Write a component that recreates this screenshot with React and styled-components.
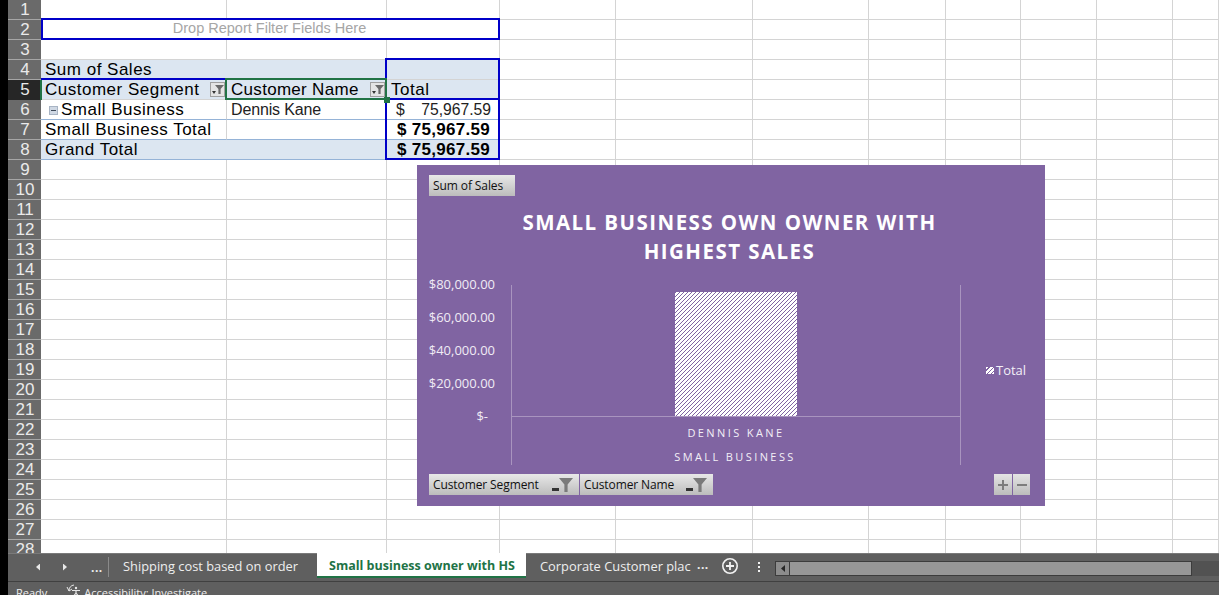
import React from 'react'
import styled, { createGlobalStyle } from 'styled-components'

const GlobalStyle = createGlobalStyle`
  html, body {
    margin: 0;
    padding: 0;
    background: #000;
    overflow: hidden;
  }
`

const COLUMNS = '33px 186px 160px 113px 116px 137px 116px 77px 75px 76px 76px 46px'
const ROW_COUNT = 28
const FILL = '#dce6f1'
const PIVOT_RULE = '#95b3d7'

const pivotRows = {
  2: { cells: [{ span: 3, text: 'Drop Report Filter Fields Here', tone: 'hint', open: true }] },
  4: {
    cells: [
      { span: 2, text: 'Sum of Sales', fill: true, open: true },
      { fill: true, open: true },
    ],
  },
  5: {
    active: true,
    cells: [
      { text: 'Customer Segment', fill: true, open: true, filter: true },
      { text: 'Customer Name', tone: 'tight', fill: true, open: true, filter: true },
      { text: 'Total', fill: true, open: true },
    ],
  },
  6: {
    cells: [
      { text: 'Small Business', collapse: true, rule: PIVOT_RULE },
      { text: 'Dennis Kane', tone: 'thin', rule: PIVOT_RULE },
      { money: true, rule: PIVOT_RULE },
    ],
  },
  7: {
    cells: [
      { text: 'Small Business Total', rule: PIVOT_RULE },
      { rule: PIVOT_RULE },
      { money: true, strong: true, rule: PIVOT_RULE },
    ],
  },
  8: {
    cells: [
      { span: 2, text: 'Grand Total', fill: true, open: true, rule: PIVOT_RULE },
      { money: true, strong: true, fill: true },
    ],
  },
}

const axisValues = ['$80,000.00', '$60,000.00', '$40,000.00', '$20,000.00', '$-']

const toneStyles = {
  hint: { size: '14.5px', spacing: '0', color: '#a6a6a6' },
  thin: { size: '16px', spacing: '-0.15px', color: '#222' },
  tight: { size: '17px', spacing: '0.3px', color: '#000' },
  normal: { size: '17px', spacing: '0.5px', color: '#000' },
}

const Funnel = () => (
  <svg width="14" height="14" viewBox="0 0 14 14">
    <path d="M0 0h14L8.6 6.5V14H5.4V6.5z" fill="#7a7a7a" />
  </svg>
)

const FilterButton = () => (
  <CellFilter>
    <svg width="12" height="11" viewBox="0 0 12 11">
      <path d="M3 1h9L8.6 5v5H6.4V5z" fill="#6a6a6a" />
      <path d="M0 7h4L2 10z" fill="#333" />
    </svg>
  </CellFilter>
)

const Cell = ({ cell }) => (
  <CellBox $span={cell.span} $fill={cell.fill} $open={cell.open} $rule={cell.rule}>
    {cell.collapse && <Collapse />}
    {cell.money && (
      <Money $strong={cell.strong}>
        <span>$</span>
        <span>75,967.59</span>
      </Money>
    )}
    {cell.text && <CellText $tone={cell.tone || 'normal'}>{cell.text}</CellText>}
    {cell.filter && <FilterButton />}
  </CellBox>
)

const SheetRow = ({ number }) => {
  const row = pivotRows[number]
  const cells = row ? row.cells : []
  const used = cells.reduce((total, cell) => total + (cell.span || 1), 0)
  const blanks = Array.from({ length: 11 - used })
  return (
    <Row>
      <RowHead $active={row && row.active}>{number}</RowHead>
      {cells.map((cell, i) => <Cell key={i} cell={cell} />)}
      {blanks.map((_, i) => <CellBox key={i} />)}
    </Row>
  )
}

const PlotDrawing = () => (
  <svg width="451" height="181" viewBox="0 0 451 181">
    <defs>
      <pattern id="hatch" width="4" height="4" patternUnits="userSpaceOnUse">
        <rect width="4" height="4" fill="#fff" />
        <path d="M3 0h1v1H3zM2 1h1v1H2zM1 2h1v1H1zM0 3h1v1H0z" fill="#8064a2" />
      </pattern>
    </defs>
    <rect x="164" y="7" width="122" height="124" fill="url(#hatch)" shapeRendering="crispEdges" />
    <path d="M0.5 0V180M449.5 0V180M0 131.5H450" stroke="#a994bf" fill="none" shapeRendering="crispEdges" />
    <PlotLabel x="225" y="152" letterSpacing="2.4">DENNIS KANE</PlotLabel>
    <PlotLabel x="224" y="176" letterSpacing="2.4">SMALL BUSINESS</PlotLabel>
  </svg>
)

const App = () => (
  <Shell>
    <GlobalStyle />
    <Sheet>
      {Array.from({ length: ROW_COUNT }, (_, i) => <SheetRow key={i} number={i + 1} />)}
      <Frame $left={33} $top={18} $width={459} $height={22} />
      <Frame $left={377} $top={58} $width={115} $height={42} />
      <Frame $left={377} $top={98} $width={115} $height={62} />
      <Rule $left={33} $top={78} $width={185} $height={2} />
      <Rule $left={32} $top={80} $width={2} $height={20} $color="#217346" />
      <Frame $left={217} $top={78} $width={162} $height={22} $color="#217346" />
      <Handle />

      <Chart>
        <FieldButton $width={86}>Sum of Sales</FieldButton>
        <ChartTitle>
          SMALL BUSINESS OWN OWNER WITH
          <br />
          HIGHEST SALES
        </ChartTitle>
        <PlotRow>
          <Axis>
            {axisValues.map((value) => <AxisValue key={value}>{value}</AxisValue>)}
          </Axis>
          <PlotDrawing />
          <Legend>
            <LegendSwatch />
            Total
          </Legend>
        </PlotRow>
        <ChartFooter>
          <FieldGroup>
            <FieldButton $width={150}>
              Customer Segment
              <FieldFilter><Caret /><Funnel /></FieldFilter>
            </FieldButton>
            <FieldButton $width={133}>
              Customer Name
              <FieldFilter><Caret /><Funnel /></FieldFilter>
            </FieldButton>
          </FieldGroup>
          <FieldGroup>
            <ZoomButton $width={18}>
              <svg width="10" height="10" viewBox="0 0 10 10">
                <path d="M5 0v10M0 5h10" stroke="#7d7d7d" strokeWidth="2" />
              </svg>
            </ZoomButton>
            <ZoomButton $width={17}>
              <svg width="10" height="10" viewBox="0 0 10 10">
                <path d="M0 5h10" stroke="#7d7d7d" strokeWidth="2" />
              </svg>
            </ZoomButton>
          </FieldGroup>
        </ChartFooter>
      </Chart>
    </Sheet>

    <TabBar>
      <TabNav>
        <NavArrow $dir="left" />
        <NavArrow $dir="right" />
        <NavDots>...</NavDots>
      </TabNav>
      <Tab $width={208}>Shipping cost based on order</Tab>
      <ActiveTab>Small business owner with HS</ActiveTab>
      <Tab $width={171}>Corporate Customer plac</Tab>
      <MoreDots>...</MoreDots>
      <AddSheet>
        <svg width="18" height="18" viewBox="0 0 18 18">
          <circle cx="9" cy="9" r="7.2" fill="none" stroke="#f2f2f2" strokeWidth="1.6" />
          <path d="M9 5v8M5 9h8" stroke="#f2f2f2" strokeWidth="1.8" />
        </svg>
      </AddSheet>
      <Kebab>
        <i /><i /><i />
      </Kebab>
      <ScrollBar>
        <ScrollStart><NavArrow $dir="left" $dark /></ScrollStart>
        <ScrollThumb />
      </ScrollBar>
    </TabBar>

    <StatusBar>
      <StatusText>Ready</StatusText>
      <svg width="17" height="14" viewBox="0 0 17 14">
        <path d="M3 7a5.5 5.5 0 0 1 5-6M1 3l2 4 3-2" fill="none" stroke="#e8e8e8" strokeWidth="1" />
        <circle cx="10" cy="4" r="1.2" fill="#e8e8e8" />
        <path d="M6 6.5h8M10 6v4M10 9l-3 4M10 9l3 4" fill="none" stroke="#e8e8e8" strokeWidth="1.2" />
      </svg>
      <StatusText>Accessibility: Investigate</StatusText>
    </StatusBar>
  </Shell>
)

const Shell = styled.div`
  width: 1219px;
  height: 595px;
  padding-left: 8px;
  box-sizing: border-box;
  display: flex;
  flex-direction: column;
  overflow: hidden;
  background: #000;
`

const Sheet = styled.div`
  position: relative;
  height: 553px;
  flex: none;
  overflow: hidden;
  background: #fff;
`

const Row = styled.div`
  display: grid;
  grid-template-columns: ${COLUMNS};
  grid-template-rows: 20px;
  height: 20px;
`

const RowHead = styled.div`
  box-sizing: border-box;
  height: 20px;
  display: flex;
  align-items: center;
  justify-content: center;
  padding-left: 1px;
  background: ${({ $active }) => ($active ? '#262626' : '#6a6a6a')};
  border-bottom: 1px solid ${({ $active }) => ($active ? '#262626' : '#a6a6a6')};
  color: #eaeaea;
  font-family: "Liberation Sans", Arial, sans-serif;
  font-size: 17px;
  line-height: 19px;
  font-weight: 400;
`

const CellBox = styled.div`
  box-sizing: border-box;
  height: 20px;
  min-width: 0;
  display: flex;
  align-items: center;
  padding-left: 4px;
  grid-column: span ${({ $span }) => $span || 1};
  background: ${({ $fill }) => ($fill ? FILL : '#fff')};
  border-right: 1px solid ${({ $open }) => ($open ? 'transparent' : '#d4d4d4')};
  border-bottom: 1px solid ${({ $rule }) => $rule || '#d4d4d4'};
  color: #000;
  font-family: "Liberation Sans", Arial, sans-serif;
  font-size: 17px;
  line-height: 19px;
  white-space: nowrap;
`

const CellText = styled.span`
  flex: ${({ $tone }) => ($tone === 'hint' ? '1' : 'none')};
  text-align: ${({ $tone }) => ($tone === 'hint' ? 'center' : 'left')};
  padding: ${({ $tone }) => ($tone === 'hint' ? '0 5px 3px 0' : '0')};
  font-size: ${({ $tone }) => toneStyles[$tone].size};
  letter-spacing: ${({ $tone }) => toneStyles[$tone].spacing};
  color: ${({ $tone }) => toneStyles[$tone].color};
  font-weight: 400;
`

const Money = styled.div`
  flex: 1;
  display: flex;
  justify-content: ${({ $strong }) => ($strong ? 'flex-end' : 'space-between')};
  gap: 5px;
  padding: 0 ${({ $strong }) => ($strong ? '9px' : '8px')} 0 5px;
  font-size: ${({ $strong }) => ($strong ? '17px' : '15.7px')};
  font-weight: ${({ $strong }) => ($strong ? 700 : 400)};
  letter-spacing: ${({ $strong }) => ($strong ? '0.3px' : '0')};
  color: ${({ $strong }) => ($strong ? '#000' : '#222')};
`

const CellFilter = styled.div`
  box-sizing: border-box;
  width: 15px;
  height: 15px;
  margin-left: auto;
  margin-right: 1px;
  display: flex;
  align-items: center;
  justify-content: center;
  background: #e4e4e4;
  border: 1px solid #a0a0a0;
`

const Collapse = styled.span`
  box-sizing: border-box;
  width: 9px;
  height: 9px;
  margin: 1px 3px 0 4px;
  display: flex;
  align-items: center;
  justify-content: center;
  background: #cfd8e4;
  border: 1px solid #a8b4c4;

  &::after {
    content: '';
    width: 5px;
    height: 1px;
    background: #3f4a5a;
  }
`

const Frame = styled.div`
  position: absolute;
  box-sizing: border-box;
  left: ${({ $left }) => $left}px;
  top: ${({ $top }) => $top}px;
  width: ${({ $width }) => $width}px;
  height: ${({ $height }) => $height}px;
  border: 2px solid ${({ $color }) => $color || '#0000c8'};
  pointer-events: none;
`

const Rule = styled.div`
  position: absolute;
  left: ${({ $left }) => $left}px;
  top: ${({ $top }) => $top}px;
  width: ${({ $width }) => $width}px;
  height: ${({ $height }) => $height}px;
  background: ${({ $color }) => $color || '#0000c8'};
`

const Handle = styled.div`
  position: absolute;
  left: 376px;
  top: 97px;
  width: 6px;
  height: 6px;
  background: #217346;
`

const Chart = styled.section`
  position: absolute;
  left: 409px;
  top: 165px;
  box-sizing: border-box;
  width: 628px;
  height: 341px;
  padding: 10px 15px 11px 12px;
  display: flex;
  flex-direction: column;
  align-items: flex-start;
  background: #8064a2;
  color: #fff;
  font-family: "Open Sans", "Noto Sans", sans-serif;
`

const FieldButton = styled.div`
  box-sizing: border-box;
  flex: none;
  width: ${({ $width }) => $width}px;
  height: 21px;
  padding: 0 0 0 4px;
  display: flex;
  align-items: center;
  justify-content: space-between;
  background: linear-gradient(#e8e8e8, #bcbcbc);
  color: #111;
  font-size: 12px;
  white-space: nowrap;
  letter-spacing: -0.1px;
`

const ChartTitle = styled.h1`
  align-self: stretch;
  margin: 12px 0 0;
  text-align: center;
  font-size: 20.5px;
  font-weight: 700;
  line-height: 29px;
  letter-spacing: 1.45px;
  color: #fff;
`

const PlotRow = styled.div`
  flex: none;
  margin-top: 19px;
  display: flex;
  align-items: flex-start;
`

const Axis = styled.div`
  box-sizing: border-box;
  width: 66px;
  margin-right: 16px;
  margin-top: -11px;
  display: flex;
  flex-direction: column;
  align-items: flex-end;
  gap: 13px;
`

const AxisValue = styled.div`
  height: 20px;
  line-height: 20px;
  font-size: 13px;
  color: #f0ebf5;
  &:last-child {
    padding-right: 7px;
  }
`

const PlotLabel = styled.text`
  fill: #f3eff7;
  font-family: "Open Sans", "Noto Sans", sans-serif;
  font-size: 11px;
  font-weight: 400;
  text-anchor: middle;
`

const Legend = styled.div`
  margin: 75px 0 0 24px;
  display: flex;
  align-items: center;
  gap: 2px;
  font-size: 13px;
  line-height: 20px;
  color: #f3eff7;
`

const LegendSwatch = styled.span`
  width: 8px;
  height: 7px;
  background: repeating-linear-gradient(135deg, #fff 0 2px, #8064a2 2px 3px);
`

const ChartFooter = styled.div`
  align-self: stretch;
  margin-top: 8px;
  display: flex;
  justify-content: space-between;
`

const FieldGroup = styled.div`
  display: flex;
  gap: 1px;
`

const FieldFilter = styled.span`
  display: flex;
  align-items: center;
  padding-right: 6px;
`

const Caret = styled.span`
  width: 7px;
  height: 3px;
  margin-top: 9px;
  background: #333;
`

const ZoomButton = styled.div`
  width: ${({ $width }) => $width}px;
  height: 21px;
  display: flex;
  align-items: center;
  justify-content: center;
  background: linear-gradient(#e4e4e4, #bcbcbc);
`

const TabBar = styled.div`
  box-sizing: border-box;
  flex: none;
  height: 29px;
  display: flex;
  align-items: flex-start;
  background: #5f5f5f;
  border-top: 1px solid #7a7a7a;
  border-bottom: 1px solid #404040;
  font-family: "Open Sans", "Noto Sans", sans-serif;
  font-size: 12.85px;
  color: #eee;
`

const TabNav = styled.div`
  box-sizing: border-box;
  flex: none;
  width: 101px;
  height: 20px;
  margin-top: 3px;
  padding-left: 28px;
  display: flex;
  align-items: center;
  border-right: 1px solid #8a8a8a;
`

const NavArrow = styled.span`
  width: 4px;
  height: 7px;
  margin-right: 23px;
  background: ${({ $dark }) => ($dark ? '#262626' : '#e8e8e8')};
  clip-path: ${({ $dir }) =>
    $dir === 'left'
      ? 'polygon(100% 0, 100% 100%, 0 50%)'
      : 'polygon(0 0, 100% 50%, 0 100%)'};
`

const NavDots = styled.span`
  margin-left: 1px;
  font-weight: 700;
  font-size: 12px;
  letter-spacing: 0.5px;
`

const Tab = styled.div`
  box-sizing: border-box;
  flex: none;
  width: ${({ $width }) => $width}px;
  height: 23px;
  padding-left: 14px;
  line-height: 24px;
  white-space: nowrap;
`

const ActiveTab = styled.div`
  box-sizing: border-box;
  flex: none;
  width: 209px;
  height: 25px;
  margin-top: -1px;
  padding-left: 12px;
  line-height: 25px;
  background: #fff;
  border-bottom: 2px solid #217346;
  color: #217346;
  font-weight: 700;
  font-size: 12.5px;
  white-space: nowrap;
`

const MoreDots = styled.span`
  flex: none;
  width: 24px;
  line-height: 22px;
  font-weight: 700;
  font-size: 12px;
  letter-spacing: 0.5px;
`

const AddSheet = styled.div`
  flex: none;
  width: 18px;
  height: 18px;
  margin-top: 3px;
`

const Kebab = styled.div`
  flex: none;
  width: 3px;
  margin: 8px 14px 0 19px;
  display: flex;
  flex-direction: column;
  gap: 2px;

  i {
    display: block;
    width: 2px;
    height: 2px;
    background: #f2f2f2;
  }
`

const ScrollBar = styled.div`
  flex: 1;
  height: 15px;
  margin-top: 7px;
  display: flex;
  background: #525252;
`

const ScrollStart = styled.div`
  box-sizing: border-box;
  flex: none;
  width: 15px;
  height: 15px;
  padding-left: 5px;
  display: flex;
  align-items: center;
  background: #8c8c8c;
  border: 1px solid #3c3c3c;
  span {
    margin: 0;
  }
`

const ScrollThumb = styled.div`
  box-sizing: border-box;
  flex: none;
  width: 402px;
  height: 15px;
  background: #979797;
  border: 1px solid #3c3c3c;
  border-left: 0;
`

const StatusBar = styled.div`
  flex: 1;
  padding-left: 8px;
  display: flex;
  align-items: flex-start;
  background: #5f5f5f;
  font-family: "Open Sans", "Noto Sans", sans-serif;
  font-size: 11px;
  color: #eee;
  svg {
    margin: 2px 1px 0 19px;
    flex: none;
  }
`

const StatusText = styled.span`
  line-height: 20px;
  margin-top: 1px;
  white-space: nowrap;
`

export default App
